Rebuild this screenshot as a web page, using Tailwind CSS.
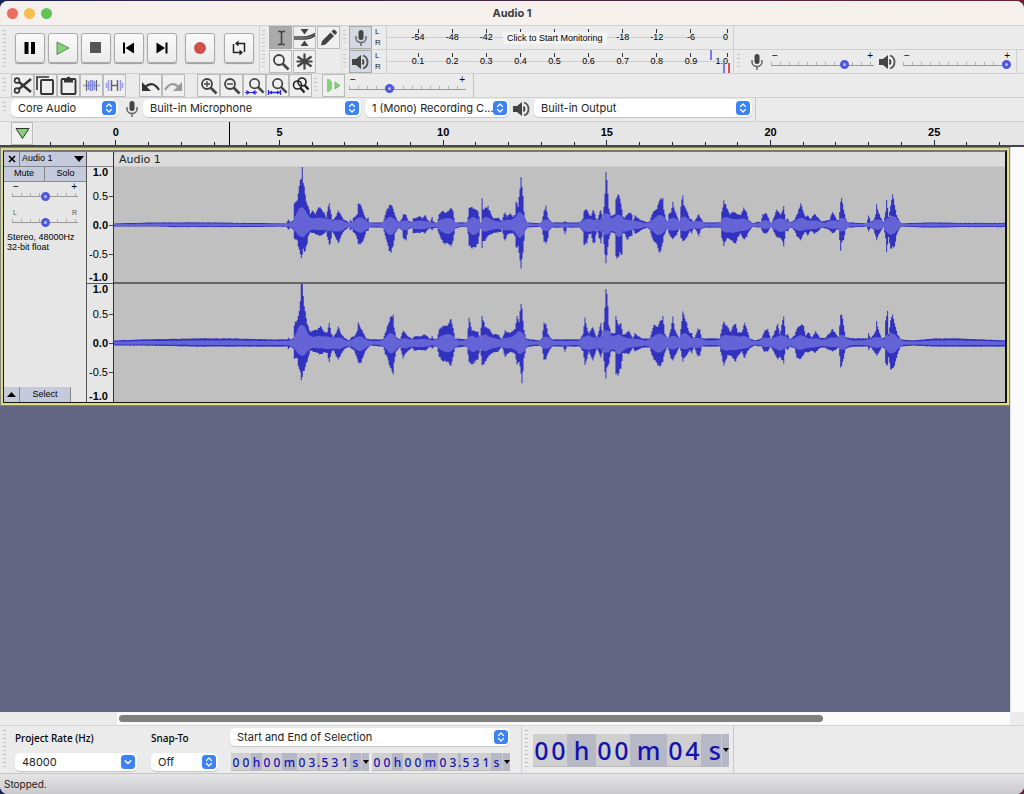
<!DOCTYPE html>
<html lang="en">
<head>
  <meta charset="UTF-8" />
  <meta name="viewport" content="width=device-width,initial-scale=1.0" />
  <title>Audio 1</title>
  <script src="https://cdn.jsdelivr.net/npm/@tailwindcss/browser@4"></script>
</head>
<body class="h-screen bg-linear-to-r from-[#1b2350] to-[#6b1f3a] font-['Inter',sans-serif] text-[#222] antialiased overflow-hidden select-none">

  <!-- Shared icons -->
  <svg class="hidden">
    <symbol id="mic" viewBox="0 0 12 16"><rect x="3.5" y="0" width="5" height="10" rx="2.5" fill="#444"/><path d="M1 6v2a5 4.5 0 0 0 10 0V6M6 12.500v3.500" fill="none" stroke="#666" stroke-width="1.500"/></symbol>
    <symbol id="speaker" viewBox="0 0 17 16"><path d="M0 5h4l5-4v14l-5-4H0z" fill="#444"/><path d="M10.500 5.500q2 2.500 0 5" fill="none" stroke="#444" stroke-width="1.800"/><path d="M11 1.500c6 2 6 11 0 13" fill="none" stroke="#555" stroke-width="1.800"/></symbol>
    <symbol id="lens" viewBox="0 0 18 18"><circle cx="7" cy="7" r="5" fill="none" stroke="#444" stroke-width="1.800"/><path d="M10.500 10.500l6 6" stroke="#444" stroke-width="2.600"/></symbol>
    <symbol id="stepper" viewBox="0 0 14 14"><rect width="14" height="14" rx="3.500" fill="#3b82f6"/><path d="M4.500 5.500L7 3l2.500 2.500M4.500 8.500L7 11l2.500-2.500" fill="none" stroke="#fff" stroke-width="1.300" stroke-linecap="round" stroke-linejoin="round"/></symbol>
    <symbol id="chevron" viewBox="0 0 14 14"><rect width="14" height="14" rx="3.500" fill="#3b82f6"/><path d="M4.200 5.800L7 8.600l2.800-2.800" fill="none" stroke="#fff" stroke-width="1.400" stroke-linecap="round" stroke-linejoin="round"/></symbol>
  </svg>

  <div class="h-full pt-px">
    <div class="h-full flex flex-col bg-[#ebebeb] rounded-t-lg rounded-b-lg overflow-hidden">

      <!-- Title bar -->
      <header class="relative h-6 shrink-0 flex items-center justify-center bg-[#f6f0ed]">
        <div class="absolute left-[7px] flex gap-[6px]">
          <button aria-label="Close" class="size-[11px] rounded-full bg-[#ec6a5f]"></button>
          <button aria-label="Minimize" class="size-[11px] rounded-full bg-[#f4bf50]"></button>
          <button aria-label="Zoom" class="size-[11px] rounded-full bg-[#61c454]"></button>
        </div>
        <h1 class="text-[11px] font-bold text-[#3c3c3c]">Audio 1</h1>
      </header>

      <!-- Transport, tools, meters -->
      <div class="h-12 shrink-0 flex border-t border-[#cfcfcf]">
        <div class="w-[260px] flex items-center border-r border-[#d0d0d0] pl-[3px]">
          <i data-grip></i>
          <div class="flex gap-[3px] pl-[9px] pb-[3px]">
            <button data-big aria-label="Pause"><svg width="30" height="30"><path d="M9.500 9h4v12h-4zM16 9h4v12h-4z" fill="#000"/></svg></button>
            <button data-big aria-label="Play"><svg width="30" height="30"><path d="M9 9l12 6-12 6.500z" fill="#84d277" stroke="#5c8a54"/></svg></button>
            <button data-big aria-label="Stop"><svg width="30" height="30"><path d="M9 9h11v11H9z" fill="#555"/></svg></button>
            <button data-big aria-label="Skip to Start"><svg width="30" height="30"><path d="M9 9.500h2v11H9zM20 9.500v11L11.500 15z" fill="#000"/></svg></button>
            <button data-big aria-label="Skip to End"><svg width="30" height="30"><path d="M18.500 9.500h2v11h-2zM9.500 9.500v11L18 15z" fill="#000"/></svg></button>
            <button data-big aria-label="Record" class="ml-[5px]"><svg width="30" height="30"><circle cx="15" cy="15" r="6" fill="#cf4f4a"/></svg></button>
            <button data-big aria-label="Loop" class="ml-[6px]"><svg width="30" height="30"><path d="M13 10.500h7.500V19M17 19.500H9.500V11" fill="none" stroke="#222" stroke-width="1.500"/><path d="M14.500 7.500v6L11 10.500zM15.500 16.500v6l3.500-3z" fill="#222"/></svg></button>
          </div>
        </div>

        <div class="w-[82px] flex border-r border-[#dcdcdc] pl-[2px] gap-[4px]">
          <i data-grip></i>
          <div class="grid grid-cols-3 grid-rows-2 gap-px">
            <button data-tool="on" aria-label="Selection Tool"><svg width="22" height="22"><path d="M8 4.500h2.500l1 1 1-1H15M11.500 5v12M8 17.500h2.500l1-1 1 1H15" fill="none" stroke="#444" stroke-width="1.600"/></svg></button>
            <button data-tool aria-label="Envelope Tool"><svg width="22" height="22"><path d="M6.500 2h8l-4 5.500zM6.500 19h8l-4-5.500z" fill="#444"/><path d="M0 10h10q5 0 11-3.500M0 12h10q6 0 11-3.500" fill="none" stroke="#444" stroke-width="1.600"/></svg></button>
            <button data-tool aria-label="Draw Tool"><svg width="22" height="22"><path d="M3 18.500l1-4.500 8.500-8.500 3.500 3.500L7.500 17.500zM13.500 4.500l1.500-1.500q1-1 2 0l1.500 1.500q1 1 0 2L17 8z" fill="#444"/></svg></button>
            <button data-tool aria-label="Zoom Tool"><svg width="18" height="18" class="m-auto"><use href="#lens"/></svg></button>
            <button data-tool aria-label="Multi-Tool"><svg width="22" height="22"><path d="M10.500 2.500v16M3.500 5.500l14 10M17.500 5.500l-14 10M2.500 10.500h16" stroke="#444" stroke-width="2.200"/></svg></button>
          </div>
        </div>

        <div class="flex-1 flex flex-col">
          <div class="flex-1 flex border-b border-[#d0d0d0]">
            <div class="w-[392px] flex gap-[3px] border-r border-[#d0d0d0] pl-px">
              <i data-grip></i>
              <button data-meter aria-label="Record Meter"><svg width="12" height="16" class="m-auto"><use href="#mic"/></svg></button>
              <div class="w-2 text-[8px] leading-[11px] text-[#222] font-['Liberation_Sans',sans-serif]"><p>L</p><p>R</p></div>
              <div class="relative flex-1 flex pl-[14px] mr-[5px] border-l border-[#d0d0d0] bg-[linear-gradient(#cfcfcf,#cfcfcf)] bg-[length:100%_1px] bg-[position:0_11px] bg-no-repeat" data-scale="-54,-48,-42,,,,-18,-12,-6,0">
                <button class="absolute left-[116px] top-[6px] h-3 px-1 bg-[#f3f3f3] text-[9px] leading-3 whitespace-nowrap font-['Liberation_Sans',sans-serif] text-black">Click to Start Monitoring</button>
              </div>
            </div>
          </div>
          <div class="flex-1 flex">
            <div class="w-[392px] flex gap-[3px] border-r border-[#d0d0d0] pl-px">
              <i data-grip></i>
              <button data-meter aria-label="Playback Meter"><svg width="17" height="16" class="m-auto"><use href="#speaker"/></svg></button>
              <div class="w-2 text-[8px] leading-[11px] text-[#222] font-['Liberation_Sans',sans-serif]"><p>L</p><p>R</p></div>
              <div class="relative flex-1 flex pl-[14px] mr-[5px] border-l border-[#d0d0d0] bg-[linear-gradient(#cfcfcf,#cfcfcf)] bg-[length:100%_1px] bg-[position:0_11px] bg-no-repeat" data-scale="0.1,0.2,0.3,0.4,0.5,0.6,0.7,0.8,0.9,1.0">
                <span class="absolute right-[16px] top-0 w-[2px] h-[10px] bg-[#7a7aee]"></span>
                <span class="absolute right-[3px] bottom-0 w-[2px] h-[10px] bg-[#7a7aee]"></span>
                <span class="absolute -right-[2px] bottom-0 w-[2px] h-[10px] bg-[#e04a4a]"></span>
              </div>
            </div>
            <div class="flex items-center border-r border-[#d0d0d0] pl-[3px] pr-[5px]">
              <i data-grip></i>
              <svg width="12" height="16" class="ml-[11px]"><use href="#mic"/></svg>
              <div data-slider class="w-[103px] ml-[8px] pb-[3px]"><input type="range" aria-label="Recording Volume" value="73" /></div>
              <svg width="17" height="16" class="ml-[5px]"><use href="#speaker"/></svg>
              <div data-slider class="w-[108px] ml-[7px] pb-[3px]"><input type="range" aria-label="Playback Volume" value="100" /></div>
            </div>
          </div>
        </div>
      </div>

      <!-- Edit bar -->
      <div class="h-6 shrink-0 flex border-t border-[#d0d0d0]">
        <div class="flex pl-[3px] border-r border-[#c4c4c4] pr-[7px]">
          <i data-grip></i>
          <div class="flex ml-[5px]">
            <button data-edit aria-label="Cut"><svg width="21" height="21"><path d="M7 7l12 10M7 14L19 4" stroke="#333" stroke-width="2.400"/><circle cx="5" cy="5.500" r="2.400" fill="none" stroke="#333" stroke-width="1.600"/><circle cx="5" cy="15.500" r="2.400" fill="none" stroke="#333" stroke-width="1.600"/></svg></button>
            <button data-edit aria-label="Copy"><svg width="21" height="21"><path d="M2 15V2h12" fill="none" stroke="#333" stroke-width="1.700"/><rect x="6" y="5" width="12" height="14" rx="1" fill="none" stroke="#333" stroke-width="1.900"/></svg></button>
            <button data-edit aria-label="Paste"><svg width="21" height="21"><rect x="3.500" y="4" width="14" height="15" rx="1" fill="none" stroke="#333" stroke-width="1.900"/><path d="M6 3h2.500q2-3 4 0H15v4.500H6z" fill="#333"/></svg></button>
            <button data-edit aria-label="Trim"><svg width="21" height="21"><path d="M2 10.500h17" stroke="#9a9aec" stroke-width="1.500"/><path d="M7.500 6v9M9.500 5v11M11.500 5v11M13.500 6v9" stroke="#7f86dc" stroke-width="1.500"/><path d="M5.500 5v11M15.500 5v11" stroke="#666" stroke-width="1.200"/></svg></button>
            <button data-edit aria-label="Silence"><svg width="21" height="21"><path d="M7 10.500h7" stroke="#666" stroke-width="1.500"/><path d="M2.500 8v5M4.500 5v11M16.500 5v11M18.500 8v5" stroke="#9a9aec" stroke-width="1.500"/><path d="M7.500 5v11M13.500 5v11" stroke="#666" stroke-width="1.500"/></svg></button>
          </div>
          <div class="flex ml-[13px]">
            <button data-edit aria-label="Undo"><svg width="21" height="21"><path d="M5 12q8-7 14 3" fill="none" stroke="#333" stroke-width="2.200"/><path d="M2 7v9h9z" fill="#333"/></svg></button>
            <button data-edit aria-label="Redo"><svg width="21" height="21"><path d="M16 12q-8-7-14 3" fill="none" stroke="#999" stroke-width="2.200"/><path d="M19 7v9h-9z" fill="#999"/></svg></button>
          </div>
          <div class="flex ml-[12px]">
            <button data-edit aria-label="Zoom In"><svg width="21" height="21"><use href="#lens" x="2" y="2" width="18" height="18"/><path d="M6 9h6M9 6v6" stroke="#444" stroke-width="1.300"/></svg></button>
            <button data-edit aria-label="Zoom Out"><svg width="21" height="21"><use href="#lens" x="2" y="2" width="18" height="18"/><path d="M6 9h6" stroke="#444" stroke-width="1.300"/></svg></button>
            <button data-edit aria-label="Fit Selection"><svg width="21" height="21"><use href="#lens" x="4" y="2" width="17" height="17"/><path d="M1 17.500h12" stroke="#2a2ad0" stroke-width="1.200"/><path d="M2.500 15v5l4-2.500zM11.500 15v5l-4-2.500z" fill="#2a2ad0"/></svg></button>
            <button data-edit aria-label="Fit Project"><svg width="21" height="21"><use href="#lens" x="4" y="2" width="17" height="17"/><path d="M1.500 15v5M13.500 15v5M2 17.500h11" stroke="#2a2ad0" stroke-width="1.300"/><path d="M5 15.500v4L2 17.500zM10 15.500v4l3-2z" fill="#2a2ad0"/></svg></button>
            <button data-edit aria-label="Zoom Toggle"><svg width="21" height="21"><circle cx="12" cy="7" r="4" fill="none" stroke="#222" stroke-width="1.600"/><circle cx="7.500" cy="10" r="4" fill="none" stroke="#222" stroke-width="1.600"/><path d="M14.500 10l4 4.500M10 12.500l4.500 5" stroke="#222" stroke-width="2.400"/></svg></button>
          </div>
          <i data-grip class="ml-[2px]"></i>
          <button data-edit aria-label="Play at Speed" class="ml-[5px]"><svg width="21" height="21"><path d="M4 4h2l3 3v7l-3 3H4z" fill="#84d277"/><path d="M12 7l5 3.500-5 3.500z" fill="#84d277" stroke="#79b870"/></svg></button>
          <div data-slider class="w-[117px] ml-[4px] pb-[3px]"><input type="range" aria-label="Playback Speed" value="33" /></div>
        </div>
      </div>

      <!-- Device bar -->
      <div class="h-6 shrink-0 flex border-t border-[#d0d0d0]">
        <div class="flex items-center pl-[3px] pr-[3px] pb-[4px] border-r border-[#c8c8c8]">
          <i data-grip></i>
          <div data-select class="w-[107px] ml-[5px]"><select aria-label="Audio Host"><option>Core Audio</option></select></div>
          <svg width="12" height="16" class="mt-[3px] ml-[8px]"><use href="#mic"/></svg>
          <div data-select class="w-[218px] ml-[5px]"><select aria-label="Recording Device"><option>Built-in Microphone</option></select></div>
          <div data-select class="w-[144px] ml-[4px]"><select aria-label="Recording Channels"><option>1 (Mono) Recording C...</option></select></div>
          <svg width="17" height="16" class="mt-[3px] ml-[4px]"><use href="#speaker"/></svg>
          <div data-select class="w-[218px] ml-[4px]"><select aria-label="Playback Device"><option>Built-in Output</option></select></div>
        </div>
      </div>

      <!-- Timeline ruler -->
      <div class="relative h-[26px] shrink-0 flex border-t border-[#d0d0d0] border-b-2 border-b-[#45454d] bg-[#e6e6e6]">
        <div class="w-[34px] pl-[11px] bg-[#ececec]">
          <button aria-label="Pinned Play Head" class="w-[22px] h-[23px] border border-[#bbb] bg-[#f0f0f0]"><svg width="20" height="20"><path d="M4 4.500h13l-6.500 10z" fill="#84d277" stroke="#333"/></svg></button>
        </div>
        <div id="ruler" class="relative flex-1 flex mr-2 text-[11px] font-bold font-['Liberation_Sans',sans-serif] text-black"></div>
      </div>

      <!-- Track area -->
      <main class="flex-1 min-h-0 flex bg-[#fafafa]">
        <div class="flex-1 min-w-0 bg-[#626683]">
          <section class="border border-[#85867a] bg-[#dfdc86] p-[2px]">
            <div class="flex border border-t-2 border-r-2 border-[#111] border-t-[#777] bg-[#c0c0c0]">

              <!-- Track control panel -->
              <div class="w-[83px] flex flex-col bg-[#e6e6e6] border-r border-[#555] font-['Liberation_Sans',sans-serif] text-[9px] text-black">
                <div class="h-[15px] flex bg-[#c4cadb] border-b border-[#888]">
                  <button aria-label="Close Track" class="w-4 border-r border-[#888] flex items-center justify-center"><svg width="8" height="8"><path d="M1 1l6 6M7 1L1 7" stroke="#000" stroke-width="1.600"/></svg></button>
                  <button class="flex-1 flex items-center justify-between pl-[2px] pr-[2px]">Audio 1<svg width="10" height="6"><path d="M0 0h10L5 6z"/></svg></button>
                </div>
                <div class="h-[15px] grid grid-cols-2 bg-[#c4cadb] border-b border-[#888]">
                  <button class="border-r border-[#888]">Mute</button>
                  <button>Solo</button>
                </div>
                <div class="flex flex-col gap-[7px] items-center">
                  <div data-slider class="w-[66px]"><input type="range" aria-label="Gain" value="50" /></div>
                  <div data-slider="L R" class="w-[66px]"><input type="range" aria-label="Pan" value="50" /></div>
                </div>
                <p class="pl-[3px] mt-[5px] leading-[10px] whitespace-nowrap">Stereo, 48000Hz<br />32-bit float</p>
                <div class="mt-auto h-[15px] flex">
                  <button aria-label="Collapse Track" class="w-4 bg-[#c4cadb] border-r border-[#888] flex items-center justify-center"><svg width="9" height="5"><path d="M0 5h9L4.500 0z"/></svg></button>
                  <button class="w-[51px] bg-[#c4cadb] border-r border-[#888]">Select</button>
                </div>
              </div>

              <!-- Amplitude scale -->
              <div class="w-[27px] flex flex-col bg-[#e6e6e6] border-r border-[#333] font-['Liberation_Sans',sans-serif] text-[11px] leading-[11px] text-black">
                <div class="h-[15px] border-b border-[#888]"></div>
                <div data-amp class="h-[117px] border-b border-[#555]"></div>
                <div data-amp class="h-[118px]"></div>
              </div>

              <!-- Clip -->
              <div class="flex-1 min-w-0 flex flex-col">
                <div class="h-[15px] pl-[5px] rounded-tl-[4px] bg-[#dbdbdb] border-b border-[#cfcfcf] text-[11px] leading-[15px] font-['DejaVu_Sans',sans-serif] text-[#222]">Audio 1</div>
                <svg id="left" class="block w-full h-[117px] border-b-2 border-[#666]" viewBox="114 -58 892 115" preserveAspectRatio="none"></svg>
                <svg id="right" class="block w-full h-[118px]" viewBox="114 -59 892 118" preserveAspectRatio="none"></svg>
              </div>
            </div>
          </section>
        </div>
        <div class="w-[14px] border-l border-[#e0e0e0]"></div>
      </main>

      <!-- Horizontal scrollbar -->
      <div class="h-[13px] shrink-0 flex">
        <div class="w-[117px]"></div>
        <div class="flex-1 flex items-center bg-[#fafafa] pl-[2px]"><div class="w-[79%] h-[7px] rounded-full bg-[#7f7f7f]"></div></div>
        <div class="w-[14px]"></div>
      </div>

      <!-- Selection bar -->
      <div class="h-[49px] shrink-0 flex border-t border-[#d4d4d4] border-b border-b-[#c4c4c4]">
        <div class="flex pl-[3px] pr-[11px] border-r border-[#d0d0d0]">
          <i data-grip></i>
          <div class="ml-[9px] w-[122px] flex flex-col justify-between pt-[5px] pb-[2px]">
            <label for="rate" class="text-[10px] leading-[14px] font-medium font-['Noto_Sans',sans-serif] text-black">Project Rate (Hz)</label>
            <div data-select="chevron"><select id="rate"><option>48000</option></select></div>
          </div>
          <div class="ml-[14px] w-[67px] flex flex-col justify-between pt-[5px] pb-[2px]">
            <label for="snap" class="text-[10px] leading-[14px] font-medium font-['Noto_Sans',sans-serif] text-black">Snap-To</label>
            <div data-select><select id="snap"><option>Off</option></select></div>
          </div>
          <div class="ml-[12px] w-[280px] flex flex-col justify-between pt-[2px] pb-[2px]">
            <div data-select><select aria-label="Selection Mode"><option>Start and End of Selection</option></select></div>
            <div class="flex justify-between h-[18px] pl-px text-[12px] leading-[19px] font-medium">
              <div data-time="00 h 00 m 03.531 s" aria-label="Selection Start"></div>
              <div data-time="00 h 00 m 03.531 s" aria-label="Selection End"></div>
            </div>
          </div>
        </div>
        <div class="flex pl-[3px] pr-[4px] border-r border-[#c8c8c8]">
          <i data-grip></i>
          <div class="flex items-center ml-[5px] pt-px text-[25px] leading-[32px] font-medium">
            <div data-time="00 h 00 m 04 s" data-size="large" aria-label="Audio Position"></div>
          </div>
        </div>
      </div>

      <footer class="h-5 shrink-0 flex items-center pl-1 bg-linear-to-b from-[#e5e4e6] to-[#cac9cb] text-[10px] text-[#222]">Stopped.</footer>
    </div>
  </div>

  <script>
    const all = (s, fn) => document.querySelectorAll(s).forEach(fn);
    const add = (el, cls) => el.classList.add(...cls.split(' '));

    // Toolbar parts
    all('[data-grip]', el => add(el, 'block w-[3px] self-stretch my-1 shrink-0 bg-[repeating-linear-gradient(#c2c2c2_0_1px,transparent_1px_4px)]'));
    all('[data-big]', el => add(el, 'size-[30px] rounded-[3px] border border-[#aaa] bg-linear-to-b from-[#fafafa] to-[#ececec] shadow-[0_1px_1px_#999] overflow-hidden [&>svg]:-m-px'));
    all('[data-tool]', el => add(el, el.dataset.tool
      ? 'w-[23px] h-[23px] flex border border-[#a5a5a5] bg-[#aaa] overflow-hidden'
      : 'w-[23px] h-[23px] flex border border-[#bbb] bg-[#f0f0f0] overflow-hidden'));
    all('[data-edit]', el => add(el, 'w-[23px] h-[23px] shrink-0 border border-[#bbb] bg-[#efefef] overflow-hidden'));
    all('[data-meter]', el => add(el, 'w-[23px] flex border border-[#aaa] bg-[#d3d8e2]'));

    all('[data-slider]', el => {
      const [lo, hi] = (el.dataset.slider || '− +').split(' ');
      add(el, 'flex flex-col justify-center shrink-0');
      const signs = lo === 'L' ? 'text-[7px] text-[#555]' : 'text-[10px] text-black';
      el.insertAdjacentHTML('afterbegin', `<div class="flex justify-between h-[9px] px-px leading-[9px] font-['Liberation_Sans',sans-serif] ${signs}"><span>${lo}</span><span>${hi}</span></div>`);
      add(el.querySelector('input'), 'block w-full h-[10px] appearance-none bg-[linear-gradient(#999,#999),repeating-linear-gradient(90deg,#b0b0b0_0_1px,transparent_1px_9px)] bg-[length:100%_1px,100%_3px] bg-[position:0_5px,0_2px] bg-no-repeat [&::-webkit-slider-thumb]:appearance-none [&::-webkit-slider-thumb]:size-[9px] [&::-webkit-slider-thumb]:rounded-full [&::-webkit-slider-thumb]:border-[3px] [&::-webkit-slider-thumb]:border-[#5156e0] [&::-webkit-slider-thumb]:bg-[#b9bbe8]');
    });

    all('[data-select]', el => {
      add(el, 'relative shrink-0');
      add(el.querySelector('select'), 'block w-full h-[18px] appearance-none rounded-[5px] bg-white pl-[7px] pr-4 text-[11px] leading-[18px] text-[#222] shadow-[0_1px_1px_#c4c4c4]');
      el.insertAdjacentHTML('beforeend', `<svg class="absolute right-[2px] top-[2px] pointer-events-none" width="14" height="14"><use href="#${el.dataset.select || 'stepper'}"/></svg>`);
    });

    // Meter scales
    all('[data-scale]', el => {
      const items = el.dataset.scale.split(',');
      el.insertAdjacentHTML('afterbegin', items.map((t, i) => `
        <div class="${i < 9 ? 'flex-1 items-center' : 'w-[20px] items-end'} flex flex-col pt-[3px] text-[9px] leading-[9px] font-['Liberation_Sans',sans-serif] text-black"><span class="w-px h-[4px] bg-[#333]"></span>${t}</div>`).join(''));
    });

    // Timeline: one cell per second, starting two seconds before zero
    const ruler = document.getElementById('ruler');
    for (let s = -2; s < 28; s++) {
      const major = s >= 0 && s % 5 === 0;
      ruler.insertAdjacentHTML('beforeend', `<div class="flex-1 flex flex-col items-center justify-end gap-[2px] leading-[12px]">${major ? `<span>${s}</span>` : ''}<span class="w-px ${major ? 'h-[5px]' : 'h-[3px]'} bg-[#222]"></span></div>`);
    }
    ruler.insertAdjacentHTML('beforeend', `<span class="absolute top-0 h-full w-px bg-black" style="left:${(3.46 + 2.5) / 30 * 100}%"></span>`);

    // Amplitude labels
    const ampRow = t => `<div class="flex-1 flex items-center justify-end gap-px">${t}<span class="w-[4px] h-px bg-[#444]"></span></div>`;
    all('[data-amp]', el => {
      add(el, 'flex flex-col justify-between');
      el.innerHTML = `<b class="pr-[5px] text-right">1.0</b>
        <div class="h-[87px] flex flex-col">${ampRow('0.5')}${ampRow('<b>0.0</b>')}${ampRow('-0.5')}</div>
        <b class="pr-[5px] text-right">-1.0</b>`;
    });

    // Time counters
    all('[data-time]', el => {
      const large = el.dataset.size === 'large';
      add(el, "flex font-['Noto_Sans',sans-serif] text-[#1212b4] bg-[#cfcfcf] border-b border-[#bbb]");
      const w = large
        ? {d: 'w-[17px] text-center', h: 'w-[29px] text-center', m: 'w-[37px] text-center', s: 'w-[20px] text-right', '.': 'w-[8px]'}
        : {d: 'w-[10px] text-center', h: 'w-[11px] text-center', m: 'w-[15px] text-center', s: 'w-[11px] text-center', '.': 'w-[3px]'};
      const cells = [...el.dataset.time.replace(/ /g, '')].map(c =>
        `<span class="${w[c] || w.d} ${'hms.'.includes(c) ? 'bg-[#b6b9c5]' : 'bg-[#cfcfcf]'}">${c}</span>`).join('');
      el.innerHTML = cells + `<button aria-label="Time Format" class="w-[7px] ml-px bg-[#b6b9c5] flex items-center justify-center"><svg width="6" height="4"><path d="M0 0h6L3 4z" fill="#000"/></svg></button>`;
    });

    // Peaks as x,up,down
    const leftPeaks = '114,1,1 160,2,1 175,2,1.5 215,2,1.5 240,1.5,1.5 286,1,1 288,5,4 290,2,2 293,4,4 294,20,14 297,23,14 298,30,20 300,43,30 302,54,31 303,44,24 305,28,26 307,20,18 308,19,11 310,11,7 312,14,7 315,10,8 317,14,9 319,18,10 322,14,10 324,12,8 326,7,6 327,14,11 329,20,20 331,10,14 332,4,6 335,7,11 337,11,15 338,14,18 341,9,10 343,5,6 347,3,3 349,1,1 350,5,5 352,2,3 353,6,6 355,8,8 357,10,13 358,21,19 361,19,18 363,12,15 366,5,6 368,7,5 369,2,2 383,2,2 385,9,10 387,15,18 389,18,24 391,20,27 393,15,20 395,9,8 397,4,4 399,2,2 402,6,5 403,10,13 406,9,14 408,4,4 412,2,2 413,6,8 417,7,7 420,8,7 422,6,6 425,10,8 427,5,5 430,2,2 432,7,5 433,3,3 437,1,2 439,10,9 442,13,15 445,12,18 448,13,17 451,17,22 453,12,15 455,2,3 462,2,1 467,2,2 468,8,9 469,17,20 472,17,22 475,15,22 478,13,17 480,2,3 481,1,2 482,26,22 483,14,16 485,16,15 488,18,10 491,10,9 493,6,7 498,7,7 501,4,6 502,3,2 504,11,14 505,12,16 507,8,9 510,11,8 513,8,8 515,10,10 516,24,23 518,17,20 519,26,29 521,48,44 523,30,27 524,12,16 525,6,5 527,2,2 540,1,1 542,3,3 544,14,16 546,18,18 548,7,12 549,5,5 552,2,2 563,2,2 565,3,9 567,2,2 580,2,2 583,6,6 584,13,18 587,15,18 589,10,9 591,8,8 593,15,18 595,10,16 597,3,3 599,9,12 601,15,17 603,5,6 605,30,30 606,56,40 607,45,28 609,15,13 611,8,7 613,9,7 615,10,8 616,26,31 618,31,32 620,25,28 622,16,28 623,8,8 625,7,8 627,10,14 629,12,12 632,10,10 633,2,3 635,9,8 638,6,7 642,4,4 647,2,2 650,3,4 652,10,11 654,14,15 657,15,20 659,24,27 661,25,26 663,28,16 664,14,10 666,5,6 668,2,2 669,10,8 671,12,12 673,22,13 675,13,11 677,9,9 680,2,2 681,17,12 683,30,15 684,20,15 687,14,12 690,6,5 692,5,8 694,2,2 697,7,6 699,10,11 701,6,4 704,2,2 721,2,2 722,12,12 724,24,20 727,17,13 730,10,14 733,12,16 736,12,17 738,10,12 741,9,8 744,16,14 747,12,11 749,4,6 753,1,1 759,3,2 761,2,2 763,10,7 767,11,8 770,3,3 772,1,1 774,7,6 777,14,12 781,10,12 784,18,20 786,4,5 788,6,6 790,2,2 793,3,3 795,5,5 797,9,10 801,20,14 803,15,10 806,7,6 808,9,10 811,5,5 815,11,8 818,7,6 822,3,2 827,4,3 830,5,5 833,13,8 837,5,4 839,4,4 841,22,25 842,28,16 844,15,15 846,6,4 848,2,2 867,1,1 869,9,6 871,3,2 874,4,4 876,10,11 877,19,14 879,12,9 882,5,4 884,2,1 886,12,13 887,24,25 889,8,12 890,12,18 891,20,23 893,31,22 895,20,22 897,9,9 900,3,3 902,1,1 930,2,2 960,1.5,1.5 1006,1.5,1.5';
    const rightPeaks = '114,2,2 145,3,2 200,4,3 230,4,3 270,3,3 287,3,3 288,5,6 290,3,3 293,4,5 294,18,15 297,22,15 298,26,22 300,40,28 301,59,37 302,59,35 303,45,28 305,32,25 307,19,18 310,10,7 313,12,8 317,13,9 320,16,11 324,11,9 327,10,9 329,20,19 331,9,9 333,5,6 337,12,14 338,17,17 341,8,10 345,4,5 349,2,3 351,5,5 354,6,7 357,12,15 358,21,18 361,13,19 363,10,13 366,4,6 370,3,2 383,3,3 385,10,10 387,15,13 389,20,20 391,27,25 393,27,31 394,15,20 396,5,8 400,3,3 403,12,14 407,7,8 412,3,4 414,6,7 420,6,6 425,8,7 430,3,3 432,6,5 434,3,3 437,4,3 439,13,13 442,16,17 445,17,18 448,18,19 451,23,23 453,14,14 455,4,4 467,3,3 469,24,19 472,12,20 478,11,16 480,3,3 482,27,23 485,16,18 489,14,12 493,8,9 498,8,8 502,3,3 505,12,13 510,9,8 515,13,10 517,26,22 519,20,18 521,40,30 522,34,40 524,12,15 526,4,4 530,3,3 540,2,2 542,4,4 544,19,16 546,19,15 548,8,9 552,3,3 563,3,3 565,3,8 567,3,3 580,3,3 583,8,8 585,26,22 587,14,15 589,9,8 593,15,18 597,4,4 601,19,14 603,6,6 605,35,28 606,55,33 607,50,25 609,18,20 611,9,8 615,9,8 616,26,32 618,18,30 621,18,26 623,8,10 625,8,10 629,12,10 633,4,4 635,9,8 642,4,4 650,4,4 652,11,11 654,17,15 657,15,20 660,20,24 663,26,18 665,9,9 668,3,3 671,13,14 673,27,16 675,12,12 678,7,7 680,4,3 683,31,17 686,22,13 690,9,6 692,9,10 694,3,3 698,13,13 700,13,12 702,4,3 720,4,3 723,18,18 724,20,21 728,15,12 731,10,12 733,16,15 736,19,17 738,10,12 742,10,8 745,19,15 747,14,9 750,4,5 755,2,2 762,4,3 764,10,8 768,14,8 771,3,3 774,8,8 778,18,16 780,8,13 784,26,19 786,7,4 788,8,7 790,3,3 795,7,5 797,14,14 801,18,15 804,16,11 806,7,8 809,10,9 812,5,7 816,11,9 820,5,4 825,4,4 833,13,8 839,5,4 841,29,23 842,27,24 844,18,15 846,5,5 853,4,3 868,4,3 869,9,6 871,4,3 876,11,10 877,21,12 879,13,10 882,4,4 885,5,5 886,22,20 888,30,22 889,8,14 891,22,24 893,29,26 895,18,22 898,8,10 901,3,3 913,2,2 937,4,3 957,4,3 1006,2,3';

    let seed = 7;
    const rnd = () => (seed = (seed * 16807) % 2147483647) / 2147483647;

    function drawWave(id, text) {
      const pts = text.split(' ').map(p => p.split(',').map(Number));
      const up = [], down = [];
      let k = 0;
      for (let x = 114; x < 1006; x++) {
        while (pts[k + 1][0] < x) k++;
        const [a, b] = [pts[k], pts[k + 1]];
        const t = (x - a[0]) / (b[0] - a[0]);
        up.push((a[1] + (b[1] - a[1]) * t) * (0.93 + rnd() * 0.14) + 0.6);
        down.push((a[2] + (b[2] - a[2]) * t) * (0.93 + rnd() * 0.14) + 0.6);
      }
      // RMS follows a smoothed version of the peaks
      const rms = arr => arr.map((v, i) => {
        const win = arr.slice(Math.max(0, i - 4), i + 5);
        const avg = win.reduce((s, n) => s + n, 0) / win.length;
        return Math.min(v * 0.8, avg < 5 ? avg * 0.55 : 1 + avg * 0.42);
      });
      const outline = (u, d) => {
        let s = 'M114 0';
        u.forEach((v, i) => s += `V${-v.toFixed(1)}H${115 + i}`);
        for (let i = d.length - 1; i >= 0; i--) s += `V${d[i].toFixed(1)}H${114 + i}`;
        return s + 'Z';
      };
      document.getElementById(id).innerHTML =
        `<path d="${outline(up, down)}" fill="#3232c0"/><path d="${outline(rms(up), rms(down))}" fill="#6464d6"/>`;
    }
    drawWave('left', leftPeaks);
    drawWave('right', rightPeaks);
  </script>
</body>
</html>
